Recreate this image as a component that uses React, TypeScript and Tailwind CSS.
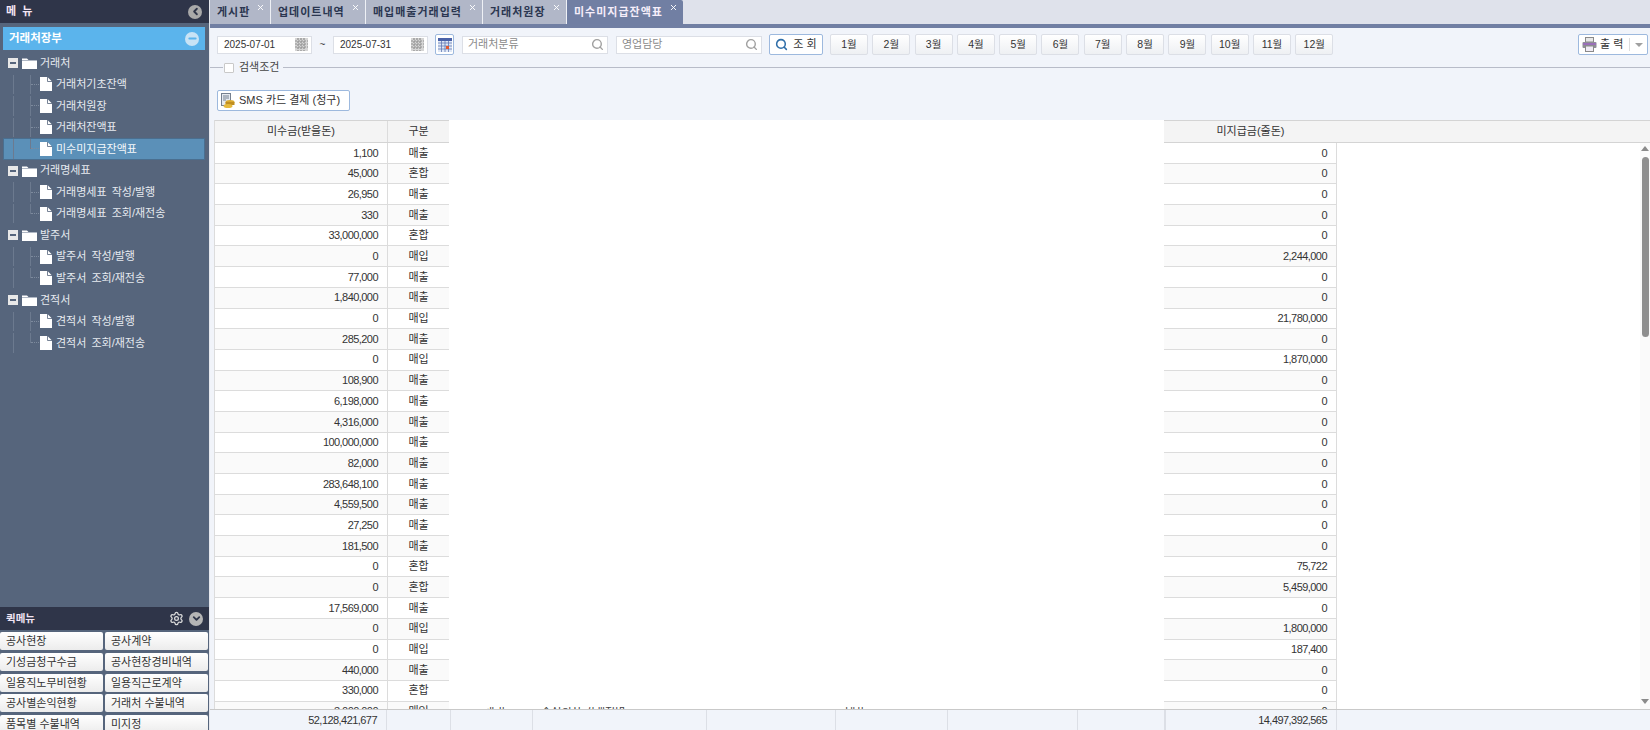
import { ChevronDown, ChevronLeft, Minus, Search, Settings, X } from "lucide-react";

const tabs = [
  { label: "게시판", w: "w-[61px]" },
  { label: "업데이트내역", w: "w-[95px]" },
  { label: "매입매출거래입력", w: "w-[117px]" },
  { label: "거래처원장", w: "w-[84px]" },
];

const tree = [
  { name: "거래처", items: ["거래처기초잔액", "거래처원장", "거래처잔액표", "미수미지급잔액표"] },
  { name: "거래명세표", items: ["거래명세표 작성/발행", "거래명세표 조회/재전송"] },
  { name: "발주서", items: ["발주서 작성/발행", "발주서 조회/재전송"] },
  { name: "견적서", items: ["견적서 작성/발행", "견적서 조회/재전송"] },
];

const quick = [
  ["공사현장", "공사계약"],
  ["기성금청구수금", "공사현장경비내역"],
  ["일용직노무비현황", "일용직근로계약"],
  ["공사별손익현황", "거래처 수불내역"],
  ["품목별 수불내역", "미지정"],
];

const months = ["1월", "2월", "3월", "4월", "5월", "6월", "7월", "8월", "9월", "10월", "11월", "12월"];

const rows: [string, string, string][] = [
  ["1,100", "매출", "0"],
  ["45,000", "혼합", "0"],
  ["26,950", "매출", "0"],
  ["330", "매출", "0"],
  ["33,000,000", "혼합", "0"],
  ["0", "매입", "2,244,000"],
  ["77,000", "매출", "0"],
  ["1,840,000", "매출", "0"],
  ["0", "매입", "21,780,000"],
  ["285,200", "매출", "0"],
  ["0", "매입", "1,870,000"],
  ["108,900", "매출", "0"],
  ["6,198,000", "매출", "0"],
  ["4,316,000", "매출", "0"],
  ["100,000,000", "매출", "0"],
  ["82,000", "매출", "0"],
  ["283,648,100", "매출", "0"],
  ["4,559,500", "매출", "0"],
  ["27,250", "매출", "0"],
  ["181,500", "매출", "0"],
  ["0", "혼합", "75,722"],
  ["0", "혼합", "5,459,000"],
  ["17,569,000", "매출", "0"],
  ["0", "매입", "1,800,000"],
  ["0", "매입", "187,400"],
  ["440,000", "매출", "0"],
  ["330,000", "혼합", "0"],
  ["3,000,000", "매입", "0"],
];

const PageIcon = () => (
  <svg width="12" height="14" viewBox="0 0 12 14" className="shrink-0">
    <path d="M0 0H7.5L12 4.5V14H0Z" fill="#fff" />
    <path d="M7.5 0V4.5H12" fill="none" stroke="#56657c" strokeWidth="0.8" />
  </svg>
);

const FolderIcon = () => (
  <svg width="15" height="12" viewBox="0 0 15 12" className="shrink-0">
    <path d="M0 1.5H5L6.5 3H15V12H0Z" fill="#fff" />
    <path d="M0 3.5H15" stroke="#9aa5b5" strokeWidth="0.8" />
  </svg>
);

const GridIcon = () => (
  <svg width="13" height="13" viewBox="0 0 13 13" className="shrink-0">
    <rect width="13" height="13" fill="#d5d5d5" />
    <path d="M0 3H13M0 6H13M0 9H13M3 0V13M6 0V13M9 0V13" stroke="#8f8f8f" strokeWidth="1.2" strokeDasharray="2 1" />
  </svg>
);

const CalendarIcon = () => (
  <svg width="14" height="14" viewBox="0 0 14 14">
    <rect width="14" height="14" fill="#dfe8f6" />
    <rect width="14" height="3" fill="#4a62a8" />
    <path d="M0 5H14M0 8H14M0 11H14M3.5 3V14M7 3V14M10.5 3V14" stroke="#6279b4" strokeWidth="0.8" />
    <rect x="8" y="8" width="3" height="3" fill="#e4572e" />
  </svg>
);

const CoinsIcon = () => (
  <svg width="14" height="15" viewBox="0 0 14 15" className="shrink-0">
    <rect x="0.5" y="0.5" width="9" height="12" fill="#e6eaf0" stroke="#75808f" />
    <path d="M2 3H8M2 5H8M2 7H5" stroke="#75808f" />
    <ellipse cx="9" cy="9" rx="4.5" ry="2" fill="#d9a92e" />
    <rect x="4.5" y="9" width="9" height="3" fill="#c08e1f" />
    <ellipse cx="7" cy="13" rx="4.5" ry="2" fill="#e5b93c" />
  </svg>
);

const PrinterIcon = () => (
  <svg width="15" height="15" viewBox="0 0 15 15" className="shrink-0">
    <rect x="3.5" y="0.5" width="8" height="4.5" fill="#e8e8e8" stroke="#8a8a8a" />
    <rect x="0.5" y="5" width="14" height="6" rx="1" fill="#8f8f96" />
    <rect x="1" y="6" width="13" height="2" fill="#9a6fb8" />
    <rect x="3.5" y="9" width="8" height="5.5" fill="#f0ecf5" stroke="#8a8a8a" />
  </svg>
);

function Sidebar() {
  return (
    <aside className="flex h-full w-[209px] shrink-0 flex-col overflow-hidden bg-[#56657c]">
      <div className="flex h-[23px] shrink-0 items-center justify-between bg-[#2f3549] pl-[6px] pr-[7px]">
        <span className="whitespace-pre text-[11px] font-bold text-[#f5e6f5]">메  뉴</span>
        <span className="flex h-[14px] w-[14px] items-center justify-center rounded-full bg-[#a9a9a9]">
          <ChevronLeft size={11} strokeWidth={4} className="text-[#2f3549]" />
        </span>
      </div>
      <div className="mx-[3px] mt-[4px] flex h-[23px] w-[202px] shrink-0 items-center justify-between bg-[#5bb4ec] pl-[6px] pr-[6px]">
        <span className="text-[11.5px] font-bold text-white">거래처장부</span>
        <span className="flex h-[14px] w-[14px] items-center justify-center rounded-full bg-[#c8e3f5]">
          <Minus size={11} strokeWidth={4} className="text-[#5bb4ec]" />
        </span>
      </div>
      <nav className="mt-[2px] h-[555px] shrink-0 text-[11px] text-[#e6eaf0] [word-spacing:2px]">
        {tree.map((group) => (
          <div key={group.name}>
            <div className="flex h-[21.55px] items-center pl-[8px]">
              <span className="flex h-[10px] w-[10px] items-center justify-center bg-[#e8e8e8]">
                <span className="h-[2px] w-[6px] bg-[#56657c]" />
              </span>
              <span className="ml-[4px]">
                <FolderIcon />
              </span>
              <span className="ml-[3px]">{group.name}</span>
            </div>
            {group.items.map((item, i) => {
              const selected = item === "미수미지급잔액표";
              const last = i === group.items.length - 1;
              return (
                <div key={item} className="flex h-[21.55px] items-stretch pl-[3px]">
                  <div
                    className={`flex w-[202px] items-center border ${
                      selected ? "border-[#4a6f90] bg-[#5b90b8] text-[#f5f8fb]" : "border-transparent"
                    }`}
                  >
                    <span className="ml-[9px] h-full w-[17px] border-l border-[#6c7a8f]" />
                    <span
                      className={`flex h-full w-[9px] items-center border-l border-[#6c7a8f] ${
                        last ? "mb-[10px] self-start !h-[10px] items-end" : ""
                      }`}
                    >
                      <span className="w-full border-t border-dotted border-[#7d8a9d]" />
                    </span>
                    <span className="ml-[1px]">
                      <PageIcon />
                    </span>
                    <span className="ml-[4px]">{item}</span>
                  </div>
                </div>
              );
            })}
          </div>
        ))}
      </nav>
      <div className="flex h-[23px] shrink-0 items-center justify-between bg-[#2f3549] pl-[6px] pr-[6px]">
        <span className="text-[10.5px] font-bold text-[#f0e4f3]">퀵메뉴</span>
        <span className="flex items-center gap-[5px]">
          <Settings size={15} className="text-[#dcdcdc]" />
          <span className="flex h-[14px] w-[14px] items-center justify-center rounded-full bg-[#b5b5b5]">
            <ChevronDown size={11} strokeWidth={4} className="text-[#2f3549]" />
          </span>
        </span>
      </div>
      <div className="grid shrink-0 grid-cols-[103px_103px] gap-x-[2px] gap-y-[2.8px] pt-[2px]">
        {quick.flat().map((label) => (
          <button
            key={label}
            className="h-[18px] rounded-[2px] bg-gradient-to-b from-white to-[#ececec] pl-[6px] text-left text-[11px] leading-[18px] text-[#333]"
          >
            {label}
          </button>
        ))}
      </div>
    </aside>
  );
}

function TabBar() {
  return (
    <div className="flex h-[28px] shrink-0 border-b-[4px] border-[#717fa3] bg-[#dfe2eb]">
      {tabs.map((tab) => (
        <div
          key={tab.label}
          className={`relative flex h-full ${tab.w} items-center border-r border-[#eef0f5] bg-[#b1b7c8] pl-[7px] text-[11px] font-bold tracking-[1px] text-[#2b3650]`}
        >
          {tab.label}
          <X size={9} strokeWidth={2.5} className="absolute right-[5px] top-[3px] text-white" />
        </div>
      ))}
      <div className="relative flex h-full w-[116px] items-center rounded-tr-[2px] bg-[#717fa3] pl-[7px] text-[11px] font-bold tracking-[1px] text-[#f6eefa]">
        미수미지급잔액표
        <X size={9} strokeWidth={2.5} className="absolute right-[5px] top-[3px] text-white" />
      </div>
    </div>
  );
}

function DateInput({ value }: { value: string }) {
  return (
    <div className="flex h-[18px] w-[95px] items-center justify-between border border-[#dcdfe6] bg-white pl-[6px] pr-[3px] text-[10px] text-[#333]">
      {value}
      <GridIcon />
    </div>
  );
}

function SearchInput({ placeholder }: { placeholder: string }) {
  return (
    <div className="flex h-[18px] w-[146px] items-center justify-between border border-[#dcdfe6] bg-white pl-[5px] pr-[3px] text-[11px] text-[#8a8a8a]">
      {placeholder}
      <Search size={13} strokeWidth={2.6} className="text-[#a0a0a0]" />
    </div>
  );
}

function Toolbar() {
  return (
    <div className="flex h-[30px] shrink-0 items-center pl-[7px] pt-[3px]">
      <DateInput value="2025-07-01" />
      <span className="w-[21px] text-center text-[10px] text-[#444]">~</span>
      <DateInput value="2025-07-31" />
      <span className="ml-[7px] flex h-[21px] w-[19px] items-center justify-center rounded-[2px] border border-[#9db9de] bg-white">
        <CalendarIcon />
      </span>
      <span className="ml-[8px]">
        <SearchInput placeholder="거래처분류" />
      </span>
      <span className="ml-[8px]">
        <SearchInput placeholder="영업담당" />
      </span>
      <button className="ml-[7px] flex h-[21px] w-[54px] items-center justify-center gap-[5px] rounded-[2px] border border-[#9db9de] bg-white text-[11px] text-[#333]">
        <Search size={13} strokeWidth={2.8} className="text-[#2f6ea8]" />
        조 회
      </button>
      <div className="ml-[7px] flex gap-[4.3px]">
        {months.map((m) => (
          <button
            key={m}
            className="flex h-[21px] w-[38px] items-center justify-center rounded-[2px] border border-[#dcdfe6] bg-gradient-to-b from-white to-[#eef0f3] text-[10.5px] text-[#333]"
          >
            {m}
          </button>
        ))}
      </div>
      <button className="ml-auto mr-[2px] flex h-[21px] w-[70px] items-center rounded-[2px] border border-[#9db9de] bg-white pl-[3px] text-[11px] text-[#333]">
        <PrinterIcon />
        <span className="ml-[3px] w-[29px] text-left">출 력</span>
        <span className="flex h-[13px] flex-1 items-center justify-center border-l border-[#dddddd]">
          <span className="h-0 w-0 border-x-[4px] border-t-[4px] border-x-transparent border-t-[#a0a0a0]" />
        </span>
      </button>
    </div>
  );
}

function SearchLegend() {
  return (
    <div className="flex h-[19px] shrink-0 items-center">
      <span className="h-px w-[13px] bg-[#b8bcc8]" />
      <span className="ml-[1px] h-[10px] w-[10px] rounded-[1px] border border-[#c9c9c9] bg-white" />
      <span className="ml-[5px] text-[11px] text-[#444]">검색조건</span>
      <span className="ml-[4px] h-px flex-1 bg-[#b8bcc8]" />
    </div>
  );
}

function Cell({ w, children, bg }: { w: string; children?: React.ReactNode; bg: string }) {
  return (
    <div className={`flex h-full ${w} ${bg} shrink-0 items-center justify-end border-r border-[#dcdcdc] pr-[9px] text-[11px] tracking-[-0.55px]`}>
      {children}
    </div>
  );
}

function Grid() {
  return (
    <div className="flex min-h-0 flex-1 flex-col pt-[10px]">
      <div className="flex min-h-0 flex-1 overflow-hidden">
        {/* 왼쪽 두 칸 */}
        <div className="ml-[4px] w-[235px] shrink-0 border-l border-[#dcdcdc] text-[#333]">
          <div className="flex h-[23px] border-y border-[#d4d4d4] bg-[#f4f4f4] text-[11px]">
            <div className="flex w-[173px] items-center justify-center border-r border-[#dcdcdc]">미수금(받을돈)</div>
            <div className="flex flex-1 items-center justify-center">구분</div>
          </div>
          {rows.map((r, i) => (
            <div key={i} className="flex h-[20.7px] border-b border-[#dcdcdc]">
              <Cell w="w-[173px]" bg={i % 2 ? "bg-[#fafafa]" : "bg-white"}>
                {r[0]}
              </Cell>
              <div className={`flex flex-1 items-center justify-center text-[11px] ${i % 2 ? "bg-[#fafafa]" : "bg-white"}`}>{r[1]}</div>
            </div>
          ))}
        </div>
        {/* 가려진 구간 */}
        <div className="flex w-[715px] shrink-0 flex-col bg-white">
          <div className="h-[587px] shrink-0" />
          <div className="h-[2px] overflow-hidden whitespace-nowrap text-[11px] leading-[9px] text-[#444]">
            <span className="ml-[36px]">관리</span>
            <span className="ml-[36px]">주식회사 거래처명</span>
            <span className="ml-[220px]">대표</span>
          </div>
        </div>
        {/* 오른쪽 칸 + 스크롤바 */}
        <div className="flex min-w-0 flex-1 text-[#333]">
          <div className="w-[173px] shrink-0">
            <div className="flex h-[23px] items-center justify-center border-y border-[#d4d4d4] bg-[#f4f4f4] text-[11px]">
              미지급금(줄돈)
            </div>
            {rows.map((r, i) => (
              <div key={i} className="h-[20.7px] border-b border-[#dcdcdc]">
                <Cell w="w-[173px]" bg={i % 2 ? "bg-[#fafafa]" : "bg-white"}>
                  {r[2]}
                </Cell>
              </div>
            ))}
          </div>
          <div className="flex min-w-0 flex-1 flex-col">
            <div className="h-[23px] shrink-0 border-y border-[#d4d4d4] bg-[#f4f4f4]" />
            <div className="flex flex-1 justify-end bg-white">
              <div className="flex h-full w-[10px] flex-col items-center bg-[#fafafa] pt-[3px]">
                <span className="h-0 w-0 border-x-[4px] border-b-[5px] border-x-transparent border-b-[#8a8a8a]" />
                <span className="mt-[6px] h-[180px] w-[7px] rounded-full bg-[#8f8f8f]" />
                <span className="mt-auto mb-[5px] h-0 w-0 border-x-[4px] border-t-[5px] border-x-transparent border-t-[#8a8a8a]" />
              </div>
            </div>
          </div>
        </div>
      </div>
      {/* 합계 */}
      <div className="flex h-[21px] shrink-0 border-t border-[#c9c9c9] bg-[#f1f4fa] text-[11px] tracking-[-0.55px] text-[#333]">
        <div className="ml-[4px] flex w-[173px] items-center justify-end border-r border-[#dcdfe6] pr-[9px]">52,128,421,677</div>
        <div className="w-[64px] border-r border-[#dcdfe6]" />
        <div className="w-[82px] border-r border-[#dcdfe6]" />
        <div className="w-[174px] border-r border-[#dcdfe6]" />
        <div className="w-[129px] border-r border-[#dcdfe6]" />
        <div className="w-[112px] border-r border-[#dcdfe6]" />
        <div className="w-[130px] border-r border-[#dcdfe6]" />
        <div className="w-[87px] border-r border-[#dcdfe6]" />
        <div className="flex w-[172px] items-center justify-end border-x border-[#dcdfe6] pr-[9px]">14,497,392,565</div>
      </div>
    </div>
  );
}

export default function App() {
  return (
    <div className="flex h-[730px] w-[1650px] overflow-hidden bg-[#f1f4fa] font-['Liberation_Sans','Noto_Sans_CJK_KR',sans-serif]">
      <Sidebar />
      <main className="flex min-w-0 flex-1 flex-col border-l border-[#e6e8ee]">
        <TabBar />
        <Toolbar />
        <SearchLegend />
        <div className="flex h-[33px] shrink-0 items-start pl-[7px] pt-[13px]">
          <button className="flex h-[21px] w-[133px] shrink-0 items-center rounded-[2px] border border-[#9db9de] bg-white pl-[3px] text-[11px] text-[#333]">
            <CoinsIcon />
            <span className="ml-[4px]">SMS 카드 결제 (청구)</span>
          </button>
        </div>
        <Grid />
      </main>
    </div>
  );
}
